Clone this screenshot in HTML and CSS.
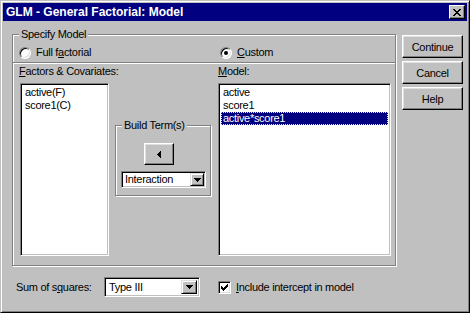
FILE: index.html
```html
<!DOCTYPE html>
<html lang="en">
<head>
    <meta charset="UTF-8">
    <title>GLM - General Factorial: Model</title>
    <link rel="stylesheet" href="styles.css">
</head>
<body>
    <div class="window">
        <div class="titlebar">
            <span class="title">GLM - General Factorial: Model</span>
            <button class="close-btn" type="button">
                <svg width="8" height="7" viewBox="0 0 8 7">
                    <path d="M0 0h2v1h-2z M6 0h2v1h-2z M1 1h2v1h-2z M5 1h2v1h-2z M2 2h4v1h-4z M3 3h2v1h-2z M2 4h4v1h-4z M1 5h2v1h-2z M5 5h2v1h-2z M0 6h2v1h-2z M6 6h2v1h-2z" fill="#000"/>
                </svg>
            </button>
        </div>

        <div class="dialog-body">
            <div class="main-col">
                <!-- Specify Model frame -->
                <div class="group specify">
                    <div class="group-title">Specify Model</div>
                    <div class="radio-row">
                        <label class="radio"><span class="radio-mark"></span><span>Full f<u>a</u>ctorial</span></label>
                        <label class="radio"><span class="radio-mark checked"></span><span><u>C</u>ustom</span></label>
                    </div>
                    <div class="separator"></div>
                    <div class="lists">
                        <div class="list-col factors">
                            <div class="list-label"><u>F</u>actors &amp; Covariates:</div>
                            <div class="listbox">
                                <div class="list-item">active(F)</div>
                                <div class="list-item">score1(C)</div>
                            </div>
                        </div>
                        <div class="build-col">
                            <div class="group build">
                                <div class="group-title">Build Term(s)</div>
                                <button class="btn arrow-btn" type="button">
                                    <svg width="4" height="7" viewBox="0 0 4 7">
                                        <path d="M0 3h1v1h-1z M1 2h1v3h-1z M2 1h1v5h-1z M3 0h1v7h-1z" fill="#000"/>
                                    </svg>
                                </button>
                                <div class="combo small">
                                    <span class="combo-text">Interaction</span>
                                    <span class="combo-btn">
                                        <svg width="7" height="4" viewBox="0 0 7 4">
                                            <path d="M0 0h7v1h-7z M1 1h5v1h-5z M2 2h3v1h-3z M3 3h1v1h-1z" fill="#000"/>
                                        </svg>
                                    </span>
                                </div>
                            </div>
                        </div>
                        <div class="list-col model">
                            <div class="list-label"><u>M</u>odel:</div>
                            <div class="listbox">
                                <div class="list-item">active</div>
                                <div class="list-item">score1</div>
                                <div class="list-item selected">active*score1</div>
                            </div>
                        </div>
                    </div>
                </div>

                <div class="bottom-row">
                    <span class="sum-label">Sum of s<u>q</u>uares:</span>
                    <div class="combo large">
                        <span class="combo-text">Type III</span>
                        <span class="combo-btn">
                            <svg width="7" height="4" viewBox="0 0 7 4">
                                <path d="M0 0h7v1h-7z M1 1h5v1h-5z M2 2h3v1h-3z M3 3h1v1h-1z" fill="#000"/>
                            </svg>
                        </span>
                    </div>
                    <label class="check">
                        <span class="check-mark">
                            <svg width="7" height="7" viewBox="0 0 7 7">
                                <path d="M6 0h1v3h-1z M5 1h1v3h-1z M4 2h1v3h-1z M3 3h1v3h-1z M2 4h1v3h-1z M1 3h1v3h-1z M0 2h1v3h-1z" fill="#000"/>
                            </svg>
                        </span>
                        <span><u>I</u>nclude intercept in model</span>
                    </label>
                </div>
            </div>

            <div class="button-col">
                <button class="btn" type="button">Continue</button>
                <button class="btn" type="button">Cancel</button>
                <button class="btn" type="button">Help</button>
            </div>
        </div>
    </div>
</body>
</html>
```

FILE: styles.css
```css
* {
    box-sizing: border-box;
}
body {
    margin: 0;
    font-family: "Liberation Sans", Arial, sans-serif;
    font-size: 11px;
    letter-spacing: -0.3px;
    color: #000;
    background-color: #c0c0c0;
}
u {
    text-decoration: underline;
    text-underline-offset: 1px;
}

/* window frame */
.window {
    width: 470px;
    height: 313px;
    padding: 2px;
    background-color: #c0c0c0;
    border: 1px solid;
    border-color: #c0c0c0 #000 #000 #c0c0c0;
    box-shadow: inset 1px 1px #fff, inset -1px -1px #808080;
    display: flex;
    flex-direction: column;
}
.titlebar {
    height: 18px;
    background-color: #000080;
    color: #fff;
    display: flex;
    align-items: center;
    justify-content: space-between;
    padding: 0 2px 0 3px;
}
.title {
    font-size: 12px;
    font-weight: bold;
    line-height: 18px;
    letter-spacing: 0;
}
.close-btn {
    width: 16px;
    height: 14px;
    padding: 0;
    margin: 0;
    background-color: #c0c0c0;
    border: 1px solid;
    border-color: #fff #000 #000 #fff;
    box-shadow: inset -1px -1px #808080;
    display: flex;
    align-items: center;
    justify-content: center;
}
.close-btn svg {
    display: block;
}

.dialog-body {
    flex: 1;
    display: flex;
    padding: 13px 0 0 9px;
}
.main-col {
    width: 385px;
}

/* etched frames */
.group {
    border: 1px solid #808080;
    box-shadow: inset 1px 1px #fff, 1px 1px #fff;
}
.group-title {
    display: table;
    margin-top: -7px;
    padding: 0 2px;
    line-height: 13px;
    background-color: #c0c0c0;
    white-space: nowrap;
}
.specify {
    width: 384px;
    height: 232px;
    padding: 0 4px 0 6px;
}
.radio-row {
    display: grid;
    grid-template-columns: 201px 1fr;
    margin-top: 5px;
    height: 13px;
}
.radio {
    display: flex;
    align-items: center;
    gap: 5px;
    line-height: 13px;
    white-space: nowrap;
}
.radio-mark {
    width: 12px;
    height: 12px;
    border-radius: 50%;
    border: 1px solid;
    border-color: #808080 #fff #fff #808080;
    box-shadow: inset 1px 1px #000, inset -1px -1px #dfdfdf;
    background-color: #fff;
    display: flex;
    align-items: center;
    justify-content: center;
}
.radio-mark.checked::after {
    content: "";
    width: 4px;
    height: 4px;
    border-radius: 50%;
    background-color: #000;
}
.separator {
    margin: 3px -4px 0 -6px;
    height: 2px;
    border-top: 1px solid #808080;
    border-bottom: 1px solid #fff;
}

/* lists */
.lists {
    display: flex;
    margin-top: 1px;
}
.list-col {
    display: flex;
    flex-direction: column;
}
.list-label {
    line-height: 13px;
    height: 18px;
    white-space: nowrap;
}
.factors {
    width: 90px;
}
.factors .listbox {
    margin-left: 1px;
}
.model {
    width: 173px;
}
.listbox {
    height: 173px;
    background-color: #fff;
    border: 1px solid;
    border-color: #808080 #fff #fff #808080;
    box-shadow: inset 1px 1px #000, inset -1px -1px #c0c0c0;
    padding: 2px;
}
.list-item {
    line-height: 13px;
    height: 13px;
    padding-left: 2px;
    white-space: nowrap;
}
.list-item.selected {
    background-color: #000080;
    color: #fff;
    outline: 1px dotted #ffff00;
    outline-offset: -1px;
}

.build-col {
    padding-top: 60px;
    margin: 0 7px 0 6px;
}
.build {
    width: 96px;
    height: 71px;
}
.build .group-title {
    margin-left: 6px;
}
.arrow-btn {
    display: flex;
    align-items: center;
    justify-content: center;
    width: 30px;
    height: 22px;
    margin: 11px 0 0 28px;
}

/* buttons */
.btn {
    font-family: inherit;
    font-size: 11px;
    letter-spacing: inherit;
    color: #000;
    padding: 0;
    background-color: #c0c0c0;
    border: 1px solid;
    border-color: #fff #000 #000 #fff;
    box-shadow: inset -1px -1px #808080, inset 1px 1px #dfdfdf;
}
.button-col {
    display: flex;
    flex-direction: column;
    gap: 3px;
    margin: 1px 0 0 5px;
}
.button-col .btn {
    width: 61px;
    height: 23px;
}

/* combo boxes */
.combo {
    display: flex;
    align-items: center;
    background-color: #fff;
    border: 1px solid;
    border-color: #808080 #fff #fff #808080;
    box-shadow: inset 1px 1px #000, inset -1px -1px #c0c0c0;
    padding: 2px;
}
.combo-text {
    flex: 1;
    padding-left: 2px;
    line-height: 13px;
    white-space: nowrap;
}
.combo-btn {
    align-self: stretch;
    width: 16px;
    background-color: #c0c0c0;
    border: 1px solid;
    border-color: #dfdfdf #000 #000 #dfdfdf;
    box-shadow: inset 1px 1px #fff, inset -1px -1px #808080;
    display: flex;
    align-items: center;
    justify-content: center;
}
.combo.small {
    width: 85px;
    height: 17px;
    margin: 6px 0 0 5px;
    padding: 1px;
}
.combo.small .combo-btn {
    width: 14px;
}
.combo.large {
    width: 96px;
    height: 20px;
}

/* bottom row */
.bottom-row {
    display: flex;
    align-items: center;
    margin-top: 11px;
    padding-left: 4px;
}
.sum-label {
    width: 88px;
    white-space: nowrap;
}
.check {
    display: flex;
    align-items: center;
    gap: 5px;
    margin-left: 18px;
    white-space: nowrap;
}
.check-mark {
    width: 13px;
    height: 13px;
    background-color: #fff;
    border: 1px solid;
    border-color: #808080 #fff #fff #808080;
    box-shadow: inset 1px 1px #000, inset -1px -1px #dfdfdf;
    display: flex;
    align-items: center;
    justify-content: center;
}
```
